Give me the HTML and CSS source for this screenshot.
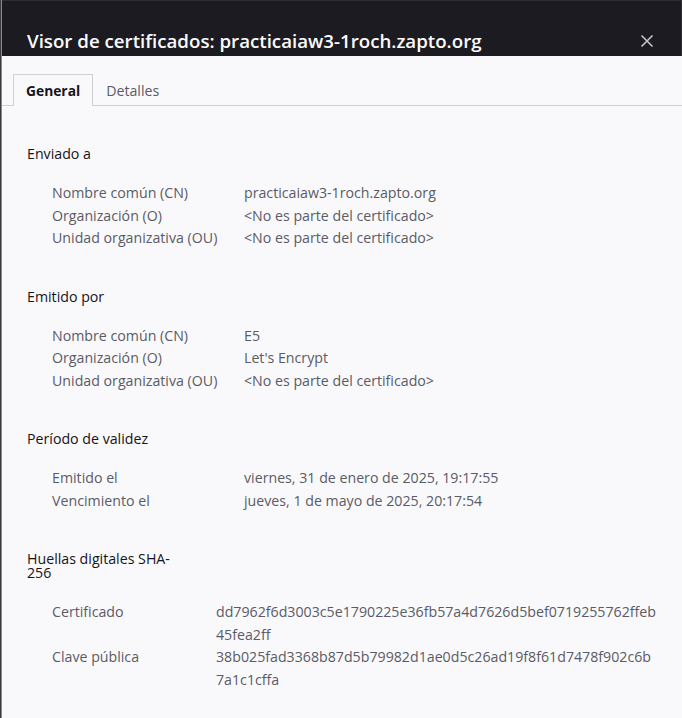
FILE: index.html
```html
<!DOCTYPE html>
<html lang="es">
<head>
<meta charset="utf-8">
<title>Visor de certificados</title>
<link rel="stylesheet" href="styles.css">
</head>
<body>
<div class="window">
  <header class="titlebar">
    <h1 class="title">Visor de certificados: practicaiaw3-1roch.zapto.org</h1>
    <button class="close" aria-label="Cerrar">
      <svg width="14" height="14" viewBox="0 0 14 14"><path d="M1.5 1.5 L12.5 12.5 M12.5 1.5 L1.5 12.5" stroke="#c4c4cc" stroke-width="1.6" fill="none"/></svg>
    </button>
  </header>
  <nav class="tabs">
    <div class="tab active">General</div>
    <div class="tab">Detalles</div>
  </nav>
  <main class="content">
    <section class="group">
      <h2 class="group-title">Enviado a</h2>
      <dl class="rows">
        <dt>Nombre común (CN)</dt><dd>practicaiaw3-1roch.zapto.org</dd>
        <dt>Organización (O)</dt><dd>&lt;No es parte del certificado&gt;</dd>
        <dt>Unidad organizativa (OU)</dt><dd>&lt;No es parte del certificado&gt;</dd>
      </dl>
    </section>
    <section class="group">
      <h2 class="group-title">Emitido por</h2>
      <dl class="rows">
        <dt>Nombre común (CN)</dt><dd>E5</dd>
        <dt>Organización (O)</dt><dd>Let's Encrypt</dd>
        <dt>Unidad organizativa (OU)</dt><dd>&lt;No es parte del certificado&gt;</dd>
      </dl>
    </section>
    <section class="group">
      <h2 class="group-title">Período de validez</h2>
      <dl class="rows">
        <dt>Emitido el</dt><dd>viernes, 31 de enero de 2025, 19:17:55</dd>
        <dt>Vencimiento el</dt><dd>jueves, 1 de mayo de 2025, 20:17:54</dd>
      </dl>
    </section>
    <section class="group">
      <h2 class="group-title narrow">Huellas digitales SHA-256</h2>
      <dl class="rows hashes">
        <dt>Certificado</dt><dd>dd7962f6d3003c5e1790225e36fb57a4d7626d5bef0719255762ffeb<wbr>45fea2ff</dd>
        <dt>Clave pública</dt><dd>38b025fad3368b87d5b79982d1ae0d5c26ad19f8f61d7478f902c6b<wbr>7a1c1cffa</dd>
      </dl>
    </section>
  </main>
</div>
</body>
</html>
```

FILE: styles.css
```css
* { box-sizing: border-box; }

html, body {
  margin: 0;
  padding: 0;
  height: 100%;
  background: #3b3a40;
}

body {
  font-family: "Open Sans", "Noto Sans", "DejaVu Sans", sans-serif;
  font-size: 14.2px;
  color: #15141a;
  overflow: hidden;
}

.window {
  margin-left: 1px;
  height: 100%;
  background: #f9f9fb;
  border-left: 1px solid #8a8a8e;
}

.titlebar {
  height: 56px;
  background: #1c1b22;
  border-top: 1px solid #2e2d35;
  border-right: 1px solid #2f2e36;
  display: flex;
  align-items: flex-start;
  justify-content: space-between;
  padding: 29px 0 0 25px;
}

.title {
  margin: 0;
  font-size: 18.7px;
  font-weight: 600;
  line-height: 22px;
  color: #fbfbfe;
}

.close {
  border: 0;
  background: none;
  padding: 0;
  margin: 4px 27px 0 0;
  width: 14px;
  height: 14px;
  display: flex;
}

.tabs {
  display: flex;
  padding: 18px 0 0 11px;
  border-bottom: 1px solid #cfcfd8;
}

.tab {
  height: 31px;
  padding: 0 12px;
  line-height: 31px;
  color: #5b5b66;
  border: 1px solid transparent;
  border-bottom: 0;
}

.tab.active {
  color: #15141a;
  font-weight: 700;
  font-size: 13.8px;
  border-color: #cfcfd8;
  background: #f9f9fb;
  margin-bottom: -1px;
  height: 32px;
}

.content {
  padding: 41px 0 0 25px;
}

.group {
  margin-bottom: 40px;
}

.group-title {
  margin: 0 0 21px 0;
  font-size: 14.2px;
  font-weight: 400;
  line-height: 14px;
  color: #15141a;
}

.group-title.narrow {
  max-width: 148px;
}

.rows {
  margin: 0;
  padding-left: 25px;
  display: grid;
  grid-template-columns: 192px 1fr;
  line-height: 22.5px;
  color: #5b5b66;
}

.rows.hashes {
  grid-template-columns: 164px 1fr;
}

.rows dt, .rows dd {
  margin: 0;
}
```
